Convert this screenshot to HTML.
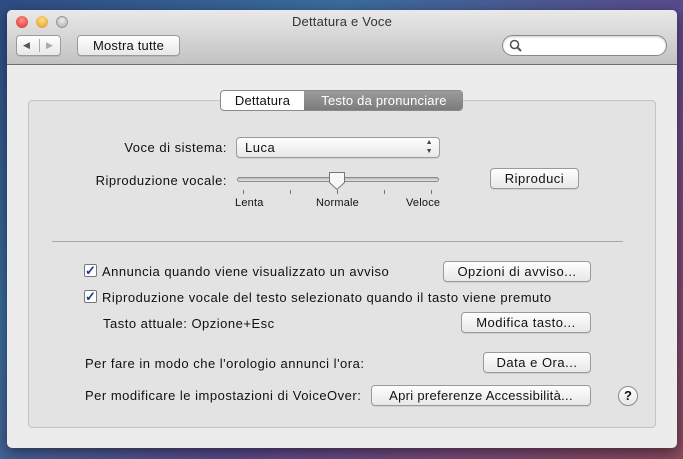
<!DOCTYPE html>
<html><head><meta charset="utf-8"><style>
*{margin:0;padding:0;box-sizing:border-box}
body{width:683px;height:459px;overflow:hidden;position:relative;font-family:"Liberation Sans",sans-serif;font-size:13px;letter-spacing:0.5px;color:#111;
background:linear-gradient(135deg,#2f4c84 0%,#3a6d9c 30%,#5a4a8e 60%,#7a4a7a 80%,#8a4a5e 100%)}
.a{position:absolute;white-space:nowrap}
.win{position:absolute;left:7px;top:10px;width:670px;height:438px;background:#ececec;border-radius:5px;overflow:hidden;box-shadow:0 4px 14px rgba(0,0,0,.5)}
.tb{position:absolute;left:0;top:0;width:670px;height:55px;background:linear-gradient(#e9e9e9,#c2c2c2);border-bottom:1px solid #6e6e6e}
.btn{position:absolute;height:21px;border:1px solid #9a9a9a;border-radius:4px;background:linear-gradient(#fff,#f0f0f0 60%,#e8e8e8);text-align:center;line-height:19px;font-size:13px;box-shadow:0 1px 0 rgba(0,0,0,.08)}
.dot{position:absolute;top:6px;width:12px;height:12px;border-radius:50%}
.cb{position:absolute;width:13px;height:13px;border:1px solid #777;border-radius:2px;background:#fff;font-size:13px;line-height:11px;color:#1a3c8a;text-align:center;font-weight:bold;letter-spacing:0}
.tick{position:absolute;width:1px;height:4px;background:#777;top:180px}
.sm{font-size:11px;letter-spacing:0.2px}
</style></head><body>
<div class="win">
 <div class="tb">
  <div class="dot" style="left:9px;background:radial-gradient(circle at 50% 35%,#ff8f8a,#d8302a)"></div>
  <div class="dot" style="left:29px;background:radial-gradient(circle at 50% 35%,#ffe08a,#e0951e)"></div>
  <div class="dot" style="left:49px;background:radial-gradient(circle at 50% 35%,#eee,#aaa);border:1px solid #999"></div>
  <div class="a" style="left:0;width:670px;text-align:center;top:4px;font-size:13px;color:#333;letter-spacing:0.2px">Dettatura e Voce</div>
  <div class="btn" style="left:9px;top:25px;width:45px"><span style="position:absolute;left:6px;top:0;font-size:9px;color:#555">◀</span><span style="position:absolute;left:22px;top:3px;width:1px;height:13px;background:#aaa"></span><span style="position:absolute;left:29px;top:0;font-size:9px;color:#aaa">▶</span></div>
  <div class="btn" style="left:70px;top:25px;width:103px;letter-spacing:0.2px">Mostra tutte</div>
  <div style="position:absolute;left:495px;top:25px;width:165px;height:21px;border:1px solid #8a8a8a;border-radius:11px;background:#fff;box-shadow:inset 0 1px 2px rgba(0,0,0,.2)">
   <svg width="14" height="14" style="position:absolute;left:6px;top:3px"><circle cx="5.5" cy="5.5" r="4" fill="none" stroke="#555" stroke-width="1.6"/><line x1="8.5" y1="8.5" x2="12" y2="12" stroke="#555" stroke-width="2"/></svg>
  </div>
 </div>
 <div style="position:absolute;left:21px;top:90px;width:628px;height:328px;background:#e3e3e3;border:1px solid #c4c4c4;border-radius:4px"></div>
 <div style="position:absolute;left:213px;top:80px;width:243px;height:21px;border:1px solid #8a8a8a;border-radius:4px;background:#fff;overflow:hidden">
  <div class="a" style="left:0;top:0;width:83px;height:19px;line-height:19px;text-align:center;letter-spacing:0.2px">Dettatura</div>
  <div class="a" style="left:83px;top:0;width:160px;height:19px;line-height:19px;text-align:center;background:linear-gradient(#9c9c9c,#7c7c7c);color:#fff;letter-spacing:0.2px">Testo da pronunciare</div>
 </div>
 <div class="a" style="left:20px;width:200px;text-align:right;top:130px">Voce di sistema:</div>
 <div class="btn" style="left:229px;top:127px;width:204px;text-align:left;padding-left:8px">Luca<span style="position:absolute;right:6px;top:0;font-size:7px;line-height:9px;color:#444">▲<br>▼</span></div>
 <div class="a" style="left:20px;width:200px;text-align:right;top:163px">Riproduzione vocale:</div>
 <div style="position:absolute;left:230px;top:167px;width:202px;height:5px;border:1px solid #8a8a8a;border-radius:3px;background:linear-gradient(#bbb,#e6e6e6)"></div>
 <svg width="18" height="20" style="position:absolute;left:321px;top:161px"><path d="M1.5 1.5h15v10l-7.5 7-7.5-7z" fill="#f7f7f7" stroke="#777"/></svg>
 <div class="tick" style="left:236px"></div><div class="tick" style="left:283px"></div><div class="tick" style="left:330px"></div><div class="tick" style="left:377px"></div><div class="tick" style="left:424px"></div>
 <div class="a sm" style="left:228px;top:187px">Lenta</div>
 <div class="a sm" style="left:309px;top:187px">Normale</div>
 <div class="a sm" style="left:399px;top:187px">Veloce</div>
 <div class="btn" style="left:483px;top:158px;width:89px">Riproduci</div>
 <div style="position:absolute;left:45px;top:231px;width:571px;height:1px;background:#a8a8a8"></div>
 <div class="cb" style="left:77px;top:254px">✓</div>
 <div class="a" style="left:95px;top:254px">Annuncia quando viene visualizzato un avviso</div>
 <div class="btn" style="left:436px;top:251px;width:148px">Opzioni di avviso...</div>
 <div class="cb" style="left:77px;top:280px">✓</div>
 <div class="a" style="left:95px;top:280px">Riproduzione vocale del testo selezionato quando il tasto viene premuto</div>
 <div class="a" style="left:96px;top:306px">Tasto attuale: Opzione+Esc</div>
 <div class="btn" style="left:454px;top:302px;width:130px">Modifica tasto...</div>
 <div class="a" style="left:78px;top:346px">Per fare in modo che l'orologio annunci l'ora:</div>
 <div class="btn" style="left:476px;top:342px;width:108px">Data e Ora...</div>
 <div class="a" style="left:78px;top:378px">Per modificare le impostazioni di VoiceOver:</div>
 <div class="btn" style="left:364px;top:375px;width:220px;letter-spacing:0.3px">Apri preferenze Accessibilità...</div>
 <div style="position:absolute;left:611px;top:376px;width:20px;height:20px;border-radius:50%;border:1px solid #8a8a8a;background:linear-gradient(#fff,#e6e6e6);text-align:center;line-height:18px;font-weight:bold;font-size:13px;letter-spacing:0">?</div>
</div>
</body></html>
